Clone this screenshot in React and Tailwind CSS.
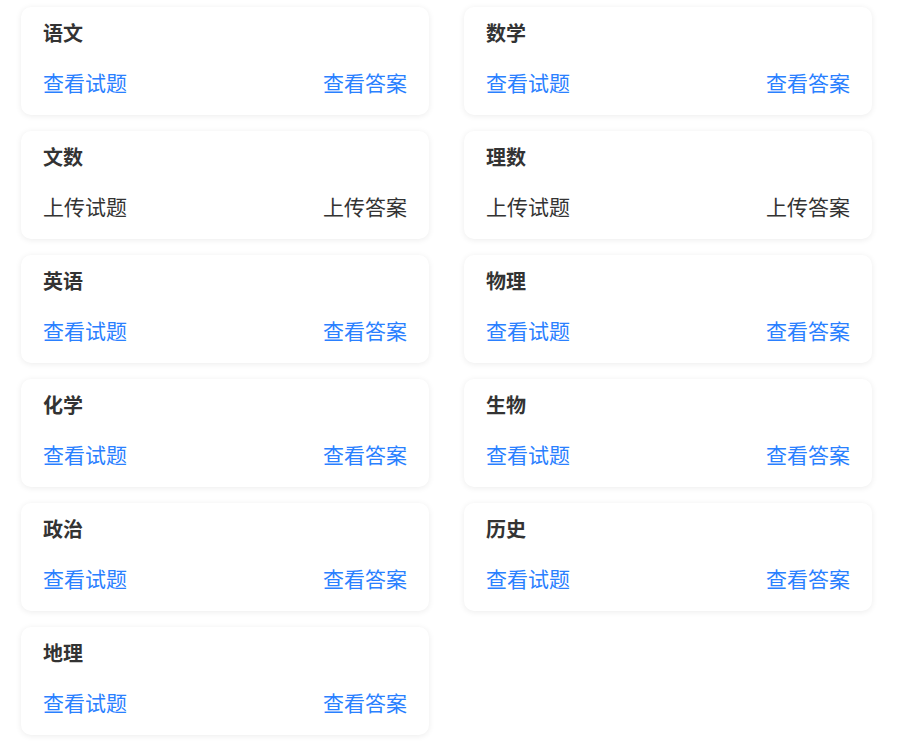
import React from "react";

const subjects = [
  { name: "语文", upload: false },
  { name: "数学", upload: false },
  { name: "文数", upload: true },
  { name: "理数", upload: true },
  { name: "英语", upload: false },
  { name: "物理", upload: false },
  { name: "化学", upload: false },
  { name: "生物", upload: false },
  { name: "政治", upload: false },
  { name: "历史", upload: false },
  { name: "地理", upload: false },
];

function Card({ name, upload }) {
  const linkCls = upload ? "text-[#333333]" : "text-[#2a80ff]";
  return (
    <div className="w-[408px] h-[108px] bg-white rounded-[10px] shadow-[0_1px_6px_rgba(0,0,0,0.08)] px-[22px] pt-[12px] pb-[19px] flex flex-col">
      <div className="h-[28px] leading-[28px] text-[20px] font-bold text-[#333333]">{name}</div>
      <div className={`mt-[21px] h-[28px] leading-[28px] text-[21px] flex justify-between ${linkCls}`}>
        <span>{upload ? "上传试题" : "查看试题"}</span>
        <span>{upload ? "上传答案" : "查看答案"}</span>
      </div>
    </div>
  );
}

export default function App() {
  return (
    <div
      className="min-h-[751px] bg-white pl-[21px] pt-[7px]"
      style={{ fontFamily: '"Noto Sans CJK SC", "Noto Sans", sans-serif' }}
    >
      <div className="grid grid-cols-[408px_408px] gap-x-[35px] gap-y-[16px]">
        {subjects.map((s) => (
          <Card key={s.name} {...s} />
        ))}
      </div>
    </div>
  );
}
